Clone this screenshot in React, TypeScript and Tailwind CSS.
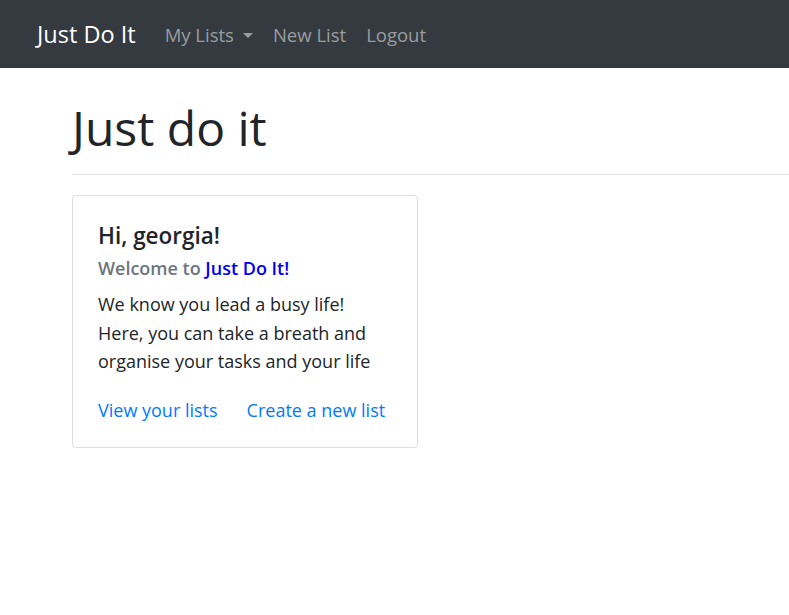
export default function App() {
  const font = { fontFamily: '"Open Sans", "Noto Sans", sans-serif' };
  return (
    <div className="min-h-[615px] bg-white" style={font}>
      <nav className="flex h-[68px] items-center bg-[#343a40] pl-[37px] pt-[2px]">
        <span className="text-[23.5px] text-white">Just Do It</span>
        <div className="ml-[29px] flex items-center gap-[20px] text-[18.5px] text-[#9a9da0]">
          <span className="flex items-center">
            My Lists
            <span className="ml-[9px] inline-block h-0 w-0 border-x-[5px] border-t-[5px] border-x-transparent border-t-[#9a9da0]" />
          </span>
          <span>New List</span>
          <span>Logout</span>
        </div>
      </nav>
      <main className="pl-[72px] pt-[22px]">
        <h1 className="text-[48px] leading-[76px] text-[#212529]">Just do it</h1>
        <hr className="mt-[8px] border-t border-[rgba(0,0,0,0.1)]" />
        <div className="mt-[20px] w-[346px] rounded-[4px] border border-[rgba(0,0,0,0.125)] px-[25px] pb-[23px] pt-[24px]">
          <h5 className="text-[22.5px] font-semibold leading-[32px] text-[#212529]">Hi, georgia!</h5>
          <h6 className="mt-[3px] text-[18px] font-semibold leading-[26px] text-[#6c757d]">
            Welcome to <span className="text-[#0000ee]">Just Do It!</span>
          </h6>
          <p className="mt-[9px] text-[18px] leading-[28.5px] text-[#212529]">
            We know you lead a busy life! Here, you can take a breath and organise your tasks and your life
          </p>
          <div className="mt-[21px] flex gap-[29px] text-[18px] leading-[27px] text-[#007bff]">
            <span>View your lists</span>
            <span>Create a new list</span>
          </div>
        </div>
      </main>
    </div>
  );
}
